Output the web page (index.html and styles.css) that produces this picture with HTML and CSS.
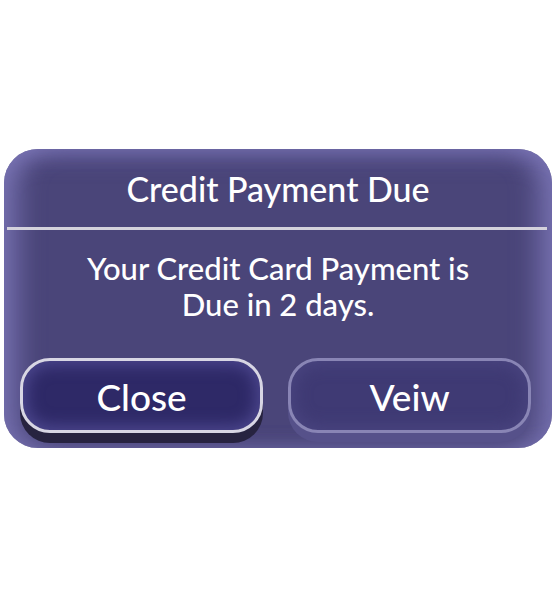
FILE: index.html
```html
<!DOCTYPE html>
<html>
<head>
<meta charset="utf-8">
<link rel="stylesheet" href="styles.css">
</head>
<body>
<div class="page">
  <div class="card">
    <div class="title">Credit Payment Due</div>
    <div class="divider"></div>
    <div class="message">Your Credit Card Payment is<br>Due in 2 days.</div>
    <div class="actions">
      <button class="btn btn-close">Close</button>
      <button class="btn btn-view">Veiw</button>
    </div>
  </div>
</div>
</body>
</html>
```
FILE: styles.css
```css
html, body {
  margin: 0;
  padding: 0;
  background: #ffffff;
}
.page {
  width: 556px;
  height: 600px;
  display: flex;
  flex-direction: column;
  padding-top: 149px;
  padding-left: 4px;
  box-sizing: border-box;
}
.card {
  width: 548px;
  height: 299px;
  box-sizing: border-box;
  border-radius: 34px;
  background: #4a4579;
  box-shadow: inset 22px 0 26px -8px rgba(130, 124, 190, 0.75),
              inset -22px 0 26px -8px rgba(130, 124, 190, 0.75),
              inset 0 18px 22px -10px rgba(120, 114, 180, 0.6);
  display: flex;
  flex-direction: column;
  font-family: "Lato", "DejaVu Sans", sans-serif;
  color: #ffffff;
}
.title {
  height: 78px;
  display: flex;
  align-items: center;
  justify-content: center;
  font-size: 34px;
  font-weight: 500;
}
.divider {
  height: 3px;
  margin: 0 5px 0 3px;
  background: #d4d2dc;
}
.message {
  margin-top: 20px;
  text-align: center;
  font-size: 31px;
  line-height: 36px;
  font-weight: 500;
}
.actions {
  display: flex;
  gap: 25px;
  margin-top: 36px;
  padding-left: 16px;
}
.btn {
  width: 243px;
  height: 75px;
  border-radius: 30px;
  font-family: "Lato", "DejaVu Sans", sans-serif;
  font-size: 37px;
  font-weight: 500;
  color: #ffffff;
  padding: 0;
  padding-top: 2px;
  box-sizing: border-box;
}
.btn-close {
  border: 3px solid #d8d6e4;
  background: #2e2967;
  box-shadow: inset 0 0 16px 4px rgba(90, 84, 160, 0.7),
              0 10px 0 #272340;
}
.btn-view {
  border: 3px solid #8985b5;
  background: #3f3a74;
  box-shadow: inset 0 0 16px 4px rgba(80, 75, 135, 0.6),
              0 9px 0 #56518a;
}
```
